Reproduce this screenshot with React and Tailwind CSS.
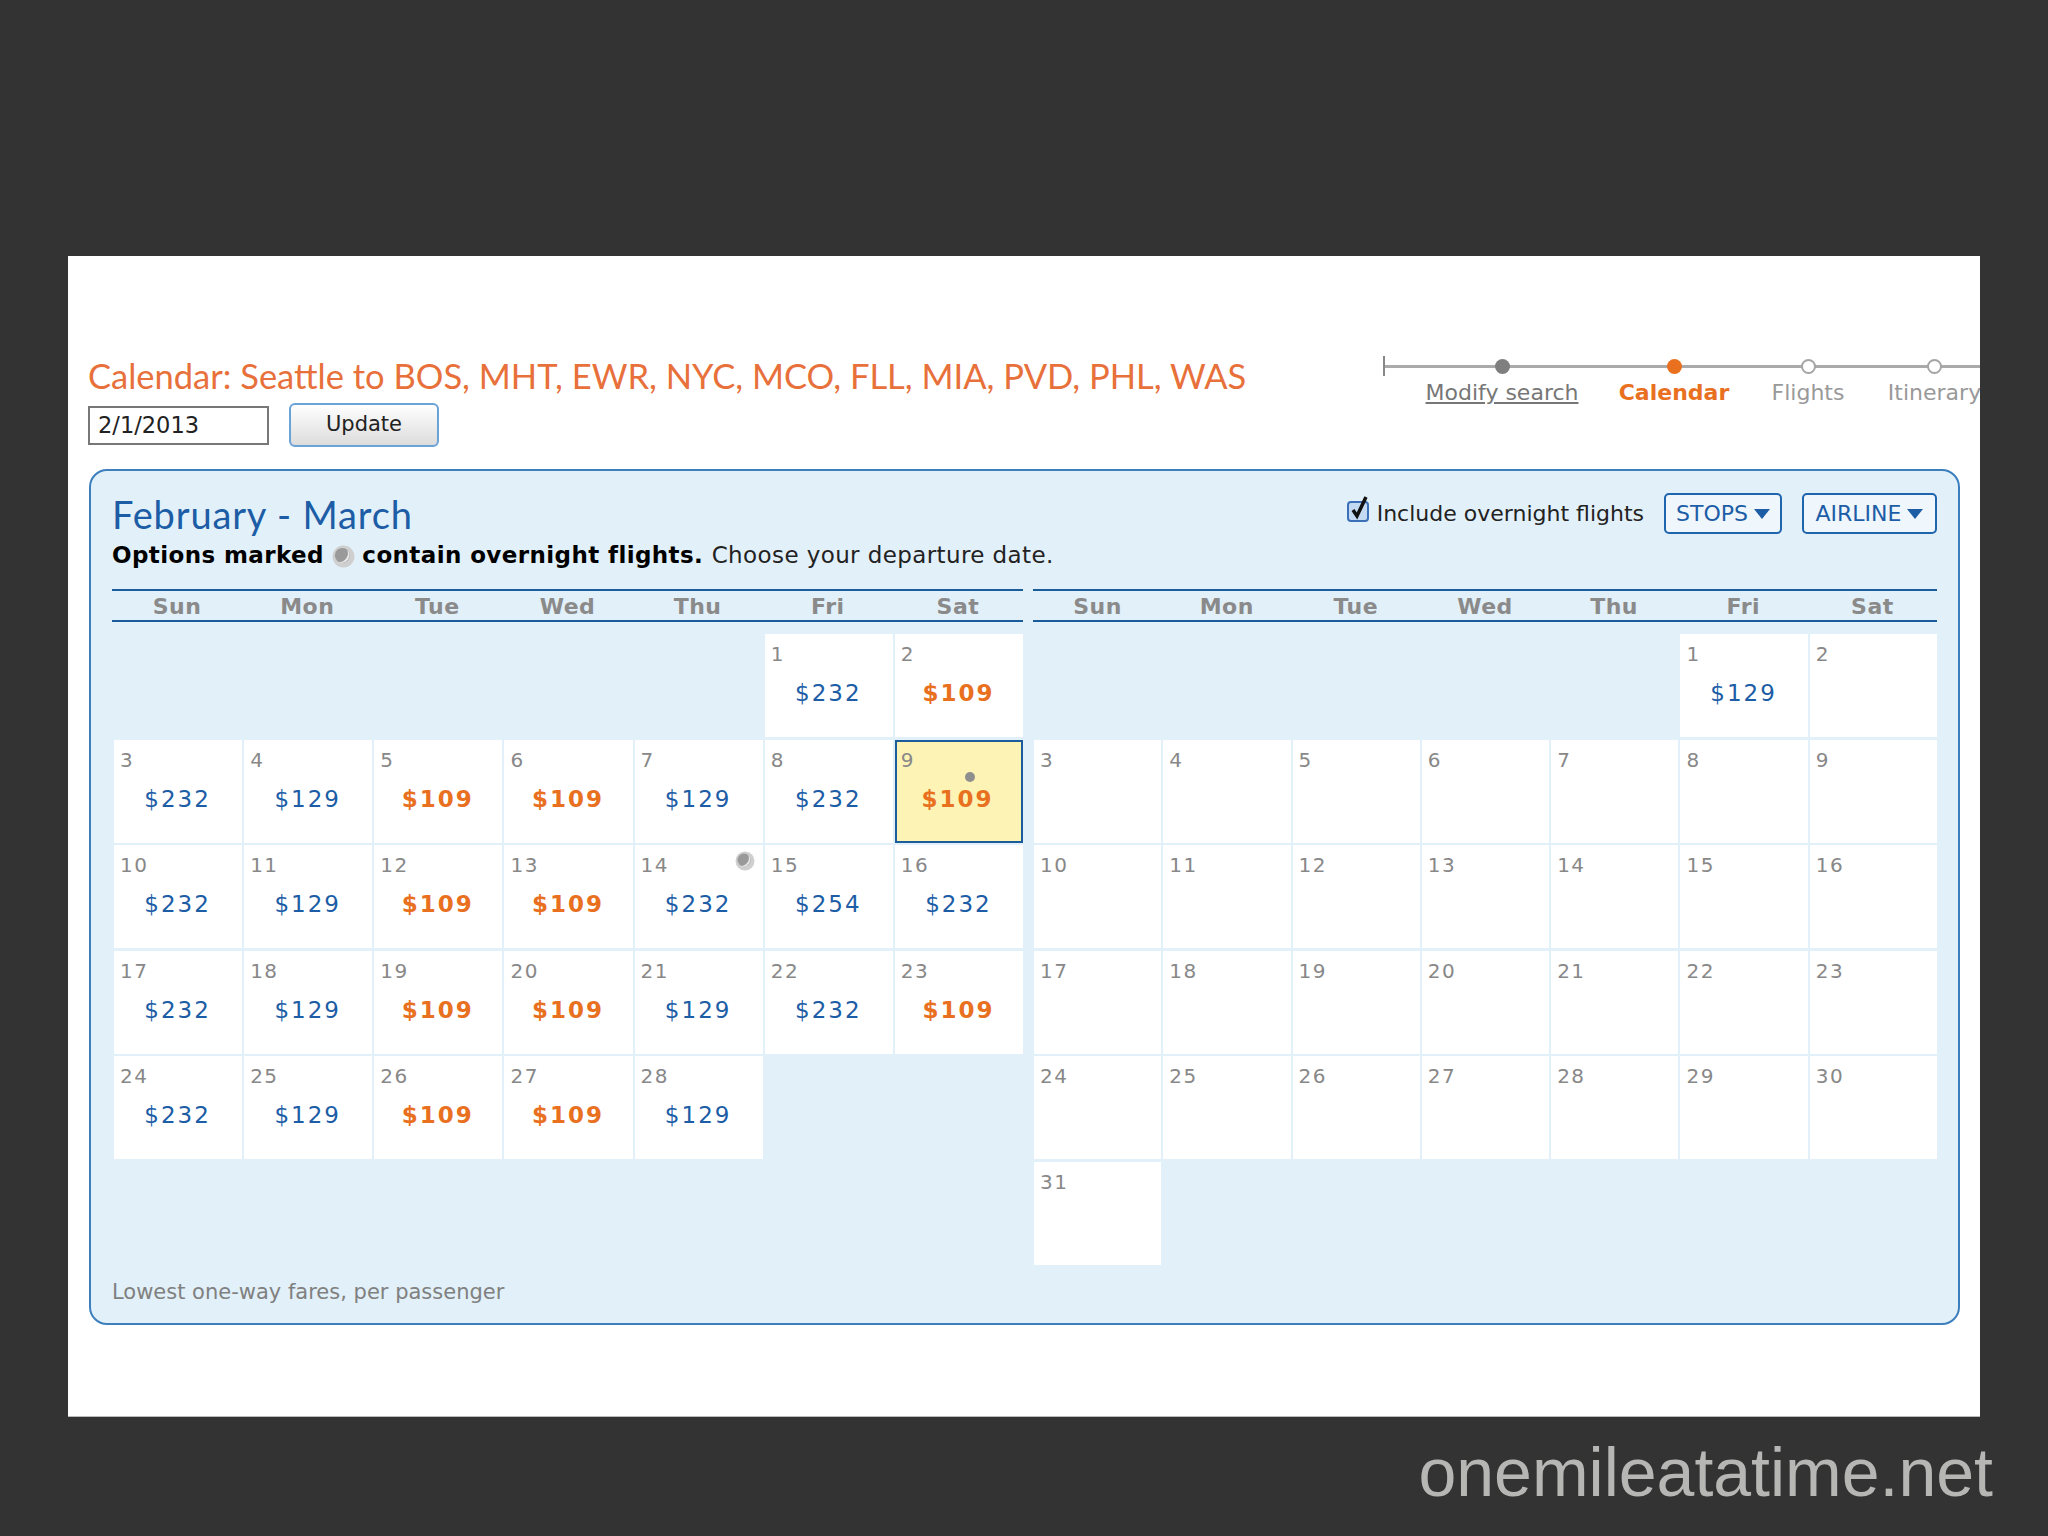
const DAY_NAMES = ["Sun", "Mon", "Tue", "Wed", "Thu", "Fri", "Sat"];

const FEB_PRICES = {
  1: 232, 2: 109,
  3: 232, 4: 129, 5: 109, 6: 109, 7: 129, 8: 232, 9: 109,
  10: 232, 11: 129, 12: 109, 13: 109, 14: 232, 15: 254, 16: 232,
  17: 232, 18: 129, 19: 109, 20: 109, 21: 129, 22: 232, 23: 109,
  24: 232, 25: 129, 26: 109, 27: 109, 28: 129,
};

const MAR_PRICES = { 1: 129 };

const STEPS = [
  { label: "Modify search", width: "w-[238px]", dot: "bg-[#7f7f7f]", text: "text-[#777] underline" },
  { label: "Calendar", width: "w-[106px]", dot: "bg-[#e8701f]", text: "text-[#e8701f] font-bold" },
  { label: "Flights", width: "w-[162px]", dot: "bg-white border-2 border-[#a5a5a5]", text: "text-[#999]" },
  { label: "Itinerary", width: "w-[91px]", dot: "bg-white border-2 border-[#a5a5a5]", text: "text-[#999]" },
];

const MoonIcon = ({ className }) => (
  <svg viewBox="0 0 20 20" className={className}>
    <circle cx="10" cy="10" r="9.5" fill="#cfcfcf" />
    <circle cx="9" cy="9" r="6.5" fill="#9a9a9a" />
    <path d="M13 3.500a7.500 7.500 0 0 1 1 9 7.500 7.500 0 0 1-9 2.500 8 8 0 0 0 8-11.500z" fill="#e8e8e8" />
  </svg>
);

const Caret = () => (
  <svg viewBox="0 0 16 10" className="w-[16px] h-[10px] ml-[6px]">
    <polygon points="0,0 16,0 8,10" fill="#1c5da6" />
  </svg>
);

const DayCell = ({ day, price, selected, overnight }) => {
  const cheap = price === 109;
  return (
    <div
      className={`relative ${
        selected ? "bg-[#fdf3b4] border-2 border-[#1a5c9c] pl-[4px] pt-[6px]" : "bg-white pl-[6px] pt-[8px]"
      }`}
    >
      <div className="text-[20px] leading-[24px] tracking-[1.5px] text-[#888]">{day}</div>
      {price && (
        <div
          className={`mt-[13px] pr-[7px] text-center text-[23px] leading-[28px] tracking-[2px] ${
            cheap ? "font-bold text-[#e8701f]" : "text-[#1c5da6]"
          }`}
        >
          ${price}
        </div>
      )}
      {selected && <div className="absolute top-[30px] left-[68px] w-[10px] h-[10px] rounded-full bg-[#8f8f8f]" />}
      {overnight && <MoonIcon className="absolute top-[6px] right-[8px] w-[20px] h-[20px]" />}
    </div>
  );
};

const Month = ({ width, inset, prices, days, selected, overnight }) => {
  const cells = [];
  for (let i = 0; i < 5; i++) cells.push(<div key={`b${i}`} />);
  for (let d = 1; d <= days; d++) {
    cells.push(
      <DayCell key={d} day={d} price={prices[d]} selected={d === selected} overnight={d === overnight} />
    );
  }

  return (
    <div className={width}>
      <div className="grid grid-cols-7 h-[33px] border-y-2 border-[#1a5c9c]">
        {DAY_NAMES.map((name) => (
          <div key={name} className="text-center text-[22px] leading-[31px] tracking-[0.5px] font-bold text-[#8a8a8a]">
            {name}
          </div>
        ))}
      </div>
      <div className={`grid grid-cols-7 auto-rows-[103px] gap-x-[2px] gap-y-[2.6px] mt-[12px] ${inset}`}>{cells}</div>
    </div>
  );
};

export default function App() {
  return (
    <div
      className="w-[2048px] h-[1536px] bg-[#333333] overflow-hidden pt-[256px] pl-[68px]"
      style={{ fontFamily: '"DejaVu Sans", sans-serif' }}
    >
      {/* white slide area */}
      <div className="w-[1912px] h-[1161px] bg-white border-b border-[#bbb] overflow-hidden pt-[97px]">
        <div className="flex justify-between">
          <div className="pl-[20px]">
            <h1
              className="text-[34.5px] leading-[46px] text-[#e8703a] whitespace-nowrap"
              style={{ fontFamily: '"Lato", sans-serif' }}
            >
              Calendar: Seattle to BOS, MHT, EWR, NYC, MCO, FLL, MIA, PVD, PHL, WAS
            </h1>
            <div className="flex items-center mt-[4px]">
              <div className="w-[181px] h-[39px] border-2 border-[#777] bg-white pl-[8px] text-[22.5px] leading-[35px] text-[#222]">
                2/1/2013
              </div>
              <button className="w-[150px] h-[44px] ml-[20px] rounded-[6px] border-2 border-[#6aa3d8] bg-gradient-to-b from-white to-[#dcdcdc] text-[21px] text-[#222]">
                Update
              </button>
            </div>
          </div>

          {/* step tracker */}
          <div className="relative flex shrink-0 w-[597px]">
            <div className="absolute left-0 right-0 top-[12px] h-[3px] bg-[#aaa]" />
            <div className="absolute left-0 top-[3px] w-[2px] h-[20px] bg-[#888]" />
            {STEPS.map((step) => (
              <div key={step.label} className={`relative flex flex-col items-center ${step.width}`}>
                <div className={`w-[15px] h-[15px] mt-[6px] rounded-full ${step.dot}`} />
                <div className={`mt-[3px] text-[22px] leading-[32px] whitespace-nowrap ${step.text}`}>{step.label}</div>
              </div>
            ))}
          </div>
        </div>

        {/* calendar box */}
        <div className="w-[1871px] h-[856px] ml-[21px] mt-[22px] rounded-[18px] border-2 border-[#3d7fbd] bg-[#e2f0f9] pl-[21px] pr-[21px]">
          <div className="flex justify-between h-[118px]">
            <div>
              <h2
                className="mt-[20px] text-[38px] leading-[46px] tracking-[0.85px] text-[#1c5da6]"
                style={{ fontFamily: '"Lato", sans-serif' }}
              >
                February - March
              </h2>
              <p className="flex items-center mt-[2px] text-[23px] leading-[32px] tracking-[0.4px] text-[#222] whitespace-pre">
                <span className="font-bold text-black">Options marked </span>
                <MoonIcon className="w-[23px] h-[23px] mr-[7px] mt-[3px]" />
                <span className="font-bold text-black">contain overnight flights. </span>
                Choose your departure date.
              </p>
            </div>
            <div className="flex items-start pt-[22px]">
              <svg viewBox="0 0 24 26" className="w-[24px] h-[26px] mt-[3px] mr-[6px]">
                <rect x="1" y="6" width="20" height="19" rx="3" fill="#c4d9f2" stroke="#3b6fb8" strokeWidth="2" />
                <path d="M6 14l4 6 9-19" fill="none" stroke="#111" strokeWidth="3.500" />
              </svg>
              <span className="text-[22px] leading-[41px] text-[#222] whitespace-nowrap">Include overnight flights</span>
              <button className="flex items-center justify-center w-[118px] h-[41px] ml-[20px] rounded-[5px] border-2 border-[#1f65ad] bg-[#eff7fc] text-[22px] text-[#1c5da6]">
                STOPS
                <Caret />
              </button>
              <button className="flex items-center justify-center w-[135px] h-[41px] ml-[20px] rounded-[5px] border-2 border-[#1f65ad] bg-[#eff7fc] text-[22px] text-[#1c5da6]">
                AIRLINE
                <Caret />
              </button>
            </div>
          </div>

          <div className="flex gap-[10px]">
            <Month width="w-[911px]" inset="pl-[2px]" prices={FEB_PRICES} days={28} selected={9} overnight={14} />
            <Month width="w-[904px]" inset="pl-[1px]" prices={MAR_PRICES} days={31} />
          </div>

          <div className="mt-[12px] text-[21px] leading-[30px] text-[#808080]">Lowest one-way fares, per passenger</div>
        </div>
      </div>

      {/* watermark */}
      <div
        className="w-[1925px] text-right text-[68px] leading-[110px] text-[#b6b6b4]"
        style={{ fontFamily: '"Liberation Sans", sans-serif' }}
      >
        onemileatatime.net
      </div>
    </div>
  );
}
